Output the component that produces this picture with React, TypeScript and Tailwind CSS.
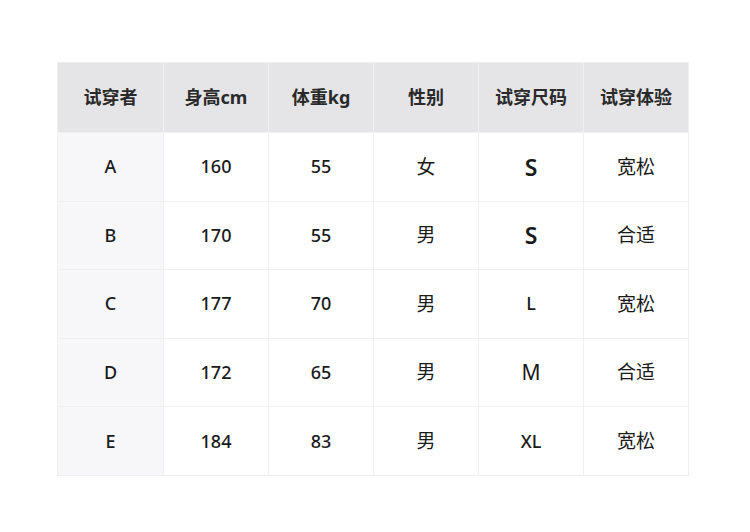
import React from "react";

const headers = ["试穿者", "身高cm", "体重kg", "性别", "试穿尺码", "试穿体验"];
const rows = [
  ["A", "160", "55", "女", "S", "宽松"],
  ["B", "170", "55", "男", "S", "合适"],
  ["C", "177", "70", "男", "L", "宽松"],
  ["D", "172", "65", "男", "M", "合适"],
  ["E", "184", "83", "男", "XL", "宽松"],
];

const font = { fontFamily: '"Noto Sans", "Noto Sans CJK SC", sans-serif' };

function cellClass(ci: number, v: string) {
  if (ci === 4) {
    if (v === "S") return "text-[23px] font-semibold";
    if (v === "M") return "text-[21px]";
    return "text-[18px] font-medium";
  }
  if (ci === 3 || ci === 5) return "text-[19px]";
  return "text-[18px] font-medium";
}

export default function App() {
  return (
    <div className="w-[750px] h-[532px] bg-white pt-[62px] pl-[57px]" style={font}>
      <div className="w-[632px] grid grid-cols-6 border border-[#efefef]">
        {headers.map((h, i) => (
          <div
            key={h}
            className={`h-[69px] flex items-center justify-center bg-[#e5e5e7] text-[18px] font-bold text-[#2a2a2a] ${i > 0 ? "border-l border-[#f0f0f2]" : ""}`}
          >
            {h}
          </div>
        ))}
        {rows.map((r, ri) =>
          r.map((c, ci) => (
            <div
              key={`${ri}-${ci}`}
              className={`h-[68.6px] flex items-center justify-center text-[#1a1a1a] border-t border-[#f0f0f0] ${ci > 0 ? "border-l bg-white" : "bg-[#f7f7f9]"} ${cellClass(ci, c)}`}
            >
              {c}
            </div>
          ))
        )}
      </div>
    </div>
  );
}
